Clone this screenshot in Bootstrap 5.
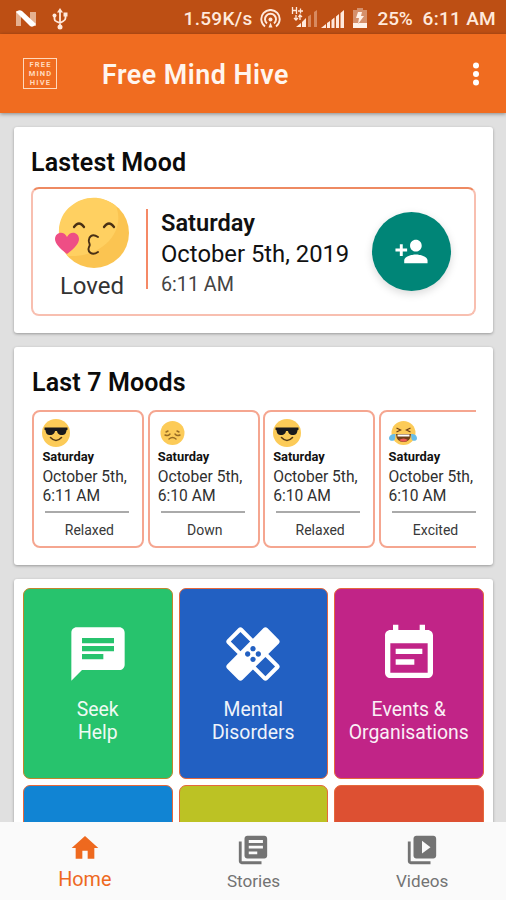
<!DOCTYPE html>
<html lang="en">
<head>
<meta charset="utf-8">
<meta name="viewport" content="width=device-width, initial-scale=1">
<title>Free Mind Hive</title>
<link href="https://cdn.jsdelivr.net/npm/bootstrap@5.3.0/dist/css/bootstrap.min.css" rel="stylesheet">
<style>
body{font-family:Roboto,"Liberation Sans",sans-serif;background:#e0e0e0;color:#111;height:900px;overflow:hidden;line-height:1}
svg{display:block;flex:none}
.statusbar{height:34px;background:#bd4f14;color:#ffe9dc;font-size:19px;padding:3px 10px 0 15px}
.statusbar span{white-space:nowrap;font-weight:500;letter-spacing:.3px}
.appbar{height:79px;background:#f06c20;box-shadow:0 1px 4px rgba(0,0,0,.4);padding:0 25px 0 23px;z-index:2;position:relative}
.brandbox{width:34px;height:31px;border:1.3px solid #ffd9bd;color:#ffd9bd;font-size:7.5px;font-weight:700;line-height:9px;letter-spacing:1.2px;padding:1px 0 0 1px}
.apptitle{font-size:26.8px;font-weight:600;color:#fff5ee;margin-left:45px;padding-top:4px;letter-spacing:.5px}
.feed{padding:14px 13px 0 14px;gap:14px;min-height:0}
.panel{background:#fff;border-radius:3px;box-shadow:0 1px 3px rgba(0,0,0,.32);flex:none}
.panel h2{font-size:25px;font-weight:600;margin:0;line-height:30px;letter-spacing:.15px;color:#0b0b0b}
.latest{height:206px;padding:21px 17px 0}
.latest-box{height:129px;margin-top:9px;border:2px solid #f8bfb0;border-top-color:#ee8a62;border-radius:8px}
.face{width:119px;padding:8px 0 0 2px}
.face svg{margin-left:19px}
.face p{font-size:24px;font-weight:400;margin:1.5px 3px 0 0;line-height:30px;color:#333}
.rule{width:2px;height:80px;background:#f58966;margin:20px 13px 0 -6px}
.when{padding-top:19px;white-space:nowrap}
.fab{width:79px;height:79px;background:#008577;box-shadow:0 3px 8px rgba(0,0,0,.15);margin:23px 23px 0 auto}
.week{height:218px;padding:21px 17px 0 18px}
.strip{gap:3.4px;margin-top:12px;padding-left:.4px;overflow:hidden}
.mood{width:112px;height:138px;flex:none;border:2px solid #f5a690;border-radius:8px;padding:7px 8px 0;white-space:nowrap}
.mood .day{font-size:12.9px;font-weight:700;line-height:15px;margin-top:2px}
.mood .date{font-size:15.6px;line-height:19.3px;color:#303030;margin-top:4px}
.mood .line{height:2px;background:#aaa;margin:4px 5px 0 3px}
.mood .feel{font-size:14px;line-height:18px;color:#383838;margin-top:8px;padding-left:2px}
.topics{padding:9px 9px 0 9px;height:400px}
.tilegrid{display:grid;grid-template-columns:repeat(3,149.5px);gap:6px}
.tile{height:191px;border:1.3px solid #e5683c;border-radius:7px;color:#fff;font-size:19.4px;line-height:23.4px;padding-top:33px}
.tile div{margin-top:12px;opacity:.93}
.t-green{background:#27c36d;border-color:#c0862c}.t-blue{background:#2260c2}.t-pink{background:#c12487}.t-sky{background:#1184d3}.t-lime{background:#bcc224}.t-red{background:#dd5032}
.bottomnav{height:78px;background:#fafafa;color:#737373;font-size:17.1px;z-index:2;position:relative}
.bottomnav a{color:inherit;text-decoration:none;line-height:22px;padding-left:1px}
.bottomnav .on{color:#ee691f;font-size:19.8px}
</style>
</head>
<body class="d-flex flex-column">
<svg width="0" height="0" class="position-absolute">
<defs>
<symbol id="cool" viewBox="0 0 28 28"><circle cx="14" cy="14" r="14" fill="#fccb58"/><path d="M2.500 8.500h23v2.200l-1 .5c-.4 3.800-2 4.700-4.500 4.700-3.500 0-4.600-1.700-5-4h-2c-.4 2.300-1.500 4-5 4-2.500 0-4.100-.9-4.500-4.700l-1-.5z" fill="#19191c"/><path d="M8.500 18.500q5.500 6 11 0" fill="none" stroke="#5a3d14" stroke-width="1.600" stroke-linecap="round"/></symbol>
</defs>
</svg>
<header class="statusbar d-flex align-items-center flex-shrink-0">
  <svg width="22" height="18" viewBox="0 0 22 18"><path d="M1 1h5v15H1zM15 2h6v14h-6z" fill="#e5b08f"/><path d="M1 2q3-3 6-1l14 13q-3 4-6 2z" fill="#fff"/></svg>
  <svg width="16" height="22" viewBox="0 0 16 22" style="margin-left:15px" fill="none" stroke="#ffe9dc" stroke-width="1.800"><path d="M8 3v15M2.500 8v3q0 2 2 2.500L8 15l3.500-2q2-.7 2-3V7"/><path d="M8 0l3 4.500H5z" fill="#ffe9dc" stroke="none"/><circle cx="8" cy="19" r="2.500" fill="#ffe9dc" stroke="none"/><circle cx="2.500" cy="7.500" r="2" fill="#ffe9dc" stroke="none"/><path d="M11.500 4.500h4v4h-4z" fill="#ffe9dc" stroke="none"/></svg>
  <span class="ms-auto">1.59K/s</span>
  <svg width="21" height="20" viewBox="0 0 21 20" fill="none" stroke="#ffe9dc" stroke-width="1.900" style="margin-left:7px"><path d="M5 17.500a9.200 9.200 0 1 1 11 0M7 14.500a5.500 5.500 0 1 1 7 0"/><circle cx="10.500" cy="10.500" r="2" fill="#ffe9dc" stroke="none"/><path d="M8.500 18.500l2-5 2 5z" fill="#ffe9dc" stroke="none"/></svg>
  <svg width="27" height="23" viewBox="0 0 27 23" style="margin-left:10px"><path d="M5 20l5-4v4zM11 15l4-4v9h-4z" fill="#ffe9dc"/><path d="M17 9.500l3-2V20h-3zM23 5l3-2v17h-3z" fill="#d88a5f"/><g stroke="#ffe9dc" stroke-width="1.300" fill="none"><path d="M1.500 0v7M5.500 0v7M1.500 3.500h4M7 4h5M9.500 1.500v5M5 8v5M3 11l2 2 2-2M9 13V8M7.500 10l1.500-2 2 2"/></g></svg>
  <svg width="24" height="20" viewBox="0 0 24 20" style="margin-left:2px" fill="#ffe9dc"><path d="M1 19l5-4v4zM7 14l3-2v7H7zM11.500 11l3-2.500V19h-3zM16 7.500 19 5v14h-3zM20.500 4 24 1v18h-3.500z"/></svg>
  <svg width="14" height="21" viewBox="0 0 14 21" style="margin-left:9px"><path d="M4 0h6v2h4v14H0V2h4z" fill="#d5906b"/><path d="M0 15h14v5H0zM9 4H5L3 10h3l-1 6 6-8H8z" fill="#fff2e9"/></svg>
  <span style="margin-left:11px;letter-spacing:-.2px">25%</span><span style="margin-left:10px">6:11 AM</span>
</header>
<nav class="appbar d-flex align-items-center flex-shrink-0">
  <div class="brandbox text-center">FREE<br>MIND<br>HIVE</div>
  <div class="apptitle">Free Mind Hive</div>
  <svg class="ms-auto" width="10" height="24" viewBox="0 0 10 24" fill="#fff"><circle cx="5" cy="3.500" r="3"/><circle cx="5" cy="12" r="3"/><circle cx="5" cy="20.500" r="3"/></svg>
</nav>
<main class="feed d-flex flex-column flex-grow-1 overflow-hidden">
  <section class="panel latest">
    <h2>Lastest Mood</h2>
    <div class="latest-box d-flex">
      <div class="face text-center">
        <svg width="76" height="72" viewBox="0 0 76 72"><circle cx="40" cy="36" r="35" fill="#fbc451"/><path d="M62 9C72 34 49 61 14 59 0 43 3 19 17 9 29-1 47-3 62 9z" fill="#ffd061"/><g fill="none" stroke="#493015" stroke-width="2.300" stroke-linecap="round"><path d="M20 30q5-7 10 0M50 30q5-7 10 0"/><path d="M44 40c-6-4-10 0-9 5 1 3 1 3 0 5-2 5 3 9 9 5" stroke-width="1.900"/></g><path d="M13 57C5 51 1 46 1 42c0-7 9-9 12-2 3-7 12-5 12 2 0 4-4 9-12 15z" fill="#ee4e85"/></svg>
        <p>Loved</p>
      </div>
      <div class="rule"></div>
      <div class="when">
        <div style="font-size:23.600px;font-weight:600;line-height:30px">Saturday</div>
        <div style="font-size:23.800px;line-height:33px">October 5th, 2019</div>
        <div style="font-size:19.700px;line-height:27px;color:#444">6:11 AM</div>
      </div>
      <div class="fab rounded-circle d-flex align-items-center justify-content-center"><svg width="35" height="35" viewBox="0 0 24 24" fill="#fff"><path d="M15 12c2.210 0 4-1.790 4-4s-1.790-4-4-4-4 1.790-4 4 1.790 4 4 4zm-9-2V7H4v3H1v2h3v3h2v-3h3v-2H6zm9 4c-2.670 0-8 1.340-8 4v2h16v-2c0-2.660-5.330-4-8-4z"/></svg></div>
    </div>
  </section>
  <section class="panel week">
    <h2>Last 7 Moods</h2>
    <div class="strip d-flex">
      <div class="mood"><svg width="28" height="28"><use href="#cool"/></svg><div class="day">Saturday</div><div class="date">October 5th,<br>6:11 AM</div><div class="line"></div><div class="feel text-center">Relaxed</div></div>
      <div class="mood"><svg width="28" height="28" viewBox="0 0 28 28"><circle cx="14.500" cy="14" r="12" fill="#fccb58"/><g fill="none" stroke="#976b24" stroke-width="1.400" stroke-linecap="round"><path d="M7 16q3 1.500 5-1M17 15q2 2.500 5 1M11 20q3.500-3 7 0M8 13l2-1M19 12l2 1"/></g></svg><div class="day">Saturday</div><div class="date">October 5th,<br>6:10 AM</div><div class="line"></div><div class="feel text-center">Down</div></div>
      <div class="mood"><svg width="28" height="28"><use href="#cool"/></svg><div class="day">Saturday</div><div class="date">October 5th,<br>6:10 AM</div><div class="line"></div><div class="feel text-center">Relaxed</div></div>
      <div class="mood"><svg width="28" height="28" viewBox="0 0 28 28"><circle cx="14.500" cy="14" r="12" fill="#fccb58"/><path d="M7 15h15q-.5 8-7.500 8T7 15z" fill="#704017"/><path d="M8.500 15.500h12v2h-12z" fill="#fff"/><path d="M10 21q4.500-3 9 0-4.500 3.500-9 0z" fill="#ef5b55"/><path d="M7.500 9l4 2-4 2M21.500 9l-4 2 4 2" fill="none" stroke="#704017" stroke-width="1.300"/><path d="M6.500 15C2 15 0 17 0 19.500S5 23 6 20zM22 15c4.500 0 6 2 6 4.500S23.500 23 22.500 20z" fill="#68bde8"/></svg><div class="day">Saturday</div><div class="date">October 5th,<br>6:10 AM</div><div class="line"></div><div class="feel text-center">Excited</div></div>
    </div>
  </section>
  <section class="panel topics">
    <div class="tilegrid">
      <div class="tile t-green text-center"><svg class="mx-auto" width="64" height="64" viewBox="0 0 24 24" fill="#fff"><path d="M20 2H4c-1.100 0-1.990.9-1.990 2L2 22l4-4h14c1.100 0 2-.9 2-2V4c0-1.100-.9-2-2-2zM6 9h12v2H6V9zm8 5H6v-2h8v2zm4-6H6V6h12v2z"/></svg><div>Seek<br>Help</div></div>
      <div class="tile t-blue text-center"><svg class="mx-auto" width="64" height="64" viewBox="0 0 24 24" fill="#fff"><path d="M17.730 12.020l3.980-3.980c.39-.39.39-1.020 0-1.410l-4.340-4.340c-.39-.39-1.020-.39-1.410 0l-3.980 3.980L8 2.290C7.800 2.100 7.550 2 7.290 2c-.25 0-.51.1-.7.290L2.250 6.630c-.39.39-.39 1.020 0 1.410l3.980 3.980L2.250 16c-.39.39-.39 1.020 0 1.410l4.340 4.340c.39.39 1.020.39 1.410 0l3.980-3.980 3.980 3.980c.2.2.45.29.71.29.26 0 .51-.1.71-.29l4.340-4.340c.39-.39.39-1.020 0-1.410l-3.990-3.980zM12 9c.55 0 1 .45 1 1s-.45 1-1 1-1-.45-1-1 .45-1 1-1zm-4.710 1.960L3.660 7.340l3.630-3.630 3.620 3.620-3.620 3.630zM10 13c-.55 0-1-.45-1-1s.45-1 1-1 1 .45 1 1-.45 1-1 1zm2 2c-.55 0-1-.45-1-1s.45-1 1-1 1 .45 1 1-.45 1-1 1zm2-4c.55 0 1 .45 1 1s-.45 1-1 1-1-.45-1-1 .45-1 1-1zm2.660 9.340l-3.630-3.620 3.630-3.630 3.620 3.620-3.620 3.630z"/></svg><div>Mental<br>Disorders</div></div>
      <div class="tile t-pink text-center"><svg class="mx-auto" width="64" height="64" viewBox="0 0 24 24" fill="#fff"><path d="M17 10H7v2h10v-2zm2-7h-1V1h-2v2H8V1H6v2H5c-1.110 0-1.990.9-1.990 2L3 19c0 1.100.89 2 2 2h14c1.100 0 2-.9 2-2V5c0-1.100-.9-2-2-2zm0 16H5V8h14v11zm-5-5H7v2h7v-2z"/></svg><div>Events &amp;<br>Organisations</div></div>
      <div class="tile t-sky"></div><div class="tile t-lime"></div><div class="tile t-red"></div>
    </div>
  </section>
</main>
<nav class="bottomnav d-flex flex-shrink-0 text-center">
  <a href="#" class="on col-4" style="padding-top:10px"><svg class="mx-auto" width="32" height="32" viewBox="0 0 24 24" fill="currentColor"><path d="M10 20v-6h4v6h5v-8h3L12 3 2 12h3v8z"/></svg><div style="margin-top:5px">Home</div></a>
  <a href="#" class="col-4" style="padding-top:11px"><svg class="mx-auto" width="34" height="34" viewBox="0 0 24 24" fill="currentColor"><path d="M4 6H2v14c0 1.100.9 2 2 2h14v-2H4V6zm16-4H8c-1.100 0-2 .9-2 2v12c0 1.100.9 2 2 2h12c1.100 0 2-.9 2-2V4c0-1.100-.9-2-2-2zm-1 9H9V9h10v2zm-4 4H9v-2h6v2zm4-8H9V5h10v2z"/></svg><div style="margin-top:3px">Stories</div></a>
  <a href="#" class="col-4" style="padding-top:11px"><svg class="mx-auto" width="34" height="34" viewBox="0 0 24 24" fill="currentColor"><path d="M4 6H2v14c0 1.100.9 2 2 2h14v-2H4V6zm16-4H8c-1.100 0-2 .9-2 2v12c0 1.100.9 2 2 2h12c1.100 0 2-.9 2-2V4c0-1.100-.9-2-2-2zm-8 12.500v-9l6 4.500-6 4.500z"/></svg><div style="margin-top:3px">Videos</div></a>
</nav>
<script src="https://cdn.jsdelivr.net/npm/bootstrap@5.3.0/dist/js/bootstrap.bundle.min.js"></script>
</body>
</html>
